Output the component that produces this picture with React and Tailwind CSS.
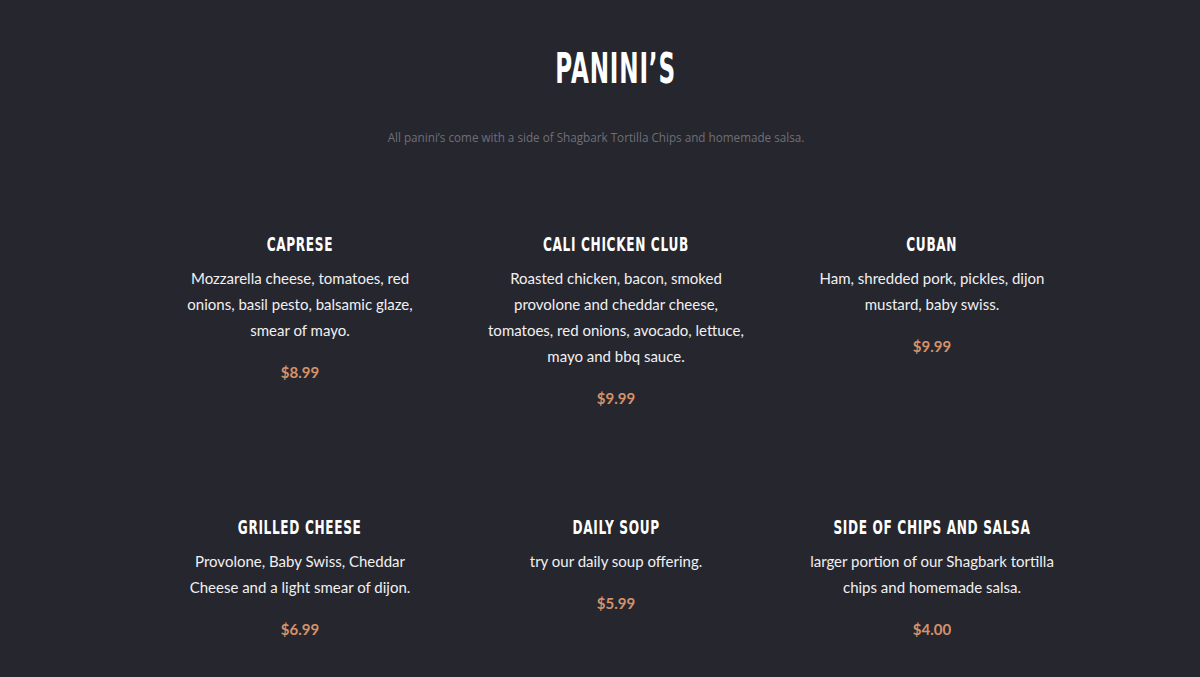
const items = [
  { name: 'Caprese', desc: 'Mozzarella cheese, tomatoes, red onions, basil pesto, balsamic glaze, smear of mayo.', price: '$8.99' },
  { name: 'Cali Chicken Club', desc: 'Roasted chicken, bacon, smoked provolone and cheddar cheese, tomatoes, red onions, avocado, lettuce, mayo and bbq sauce.', price: '$9.99' },
  { name: 'Cuban', desc: 'Ham, shredded pork, pickles, dijon mustard, baby swiss.', price: '$9.99' },
  { name: 'Grilled Cheese', desc: 'Provolone, Baby Swiss, Cheddar Cheese and a light smear of dijon.', price: '$6.99' },
  { name: 'Daily Soup', desc: 'try our daily soup offering.', price: '$5.99' },
  { name: 'Side of Chips and Salsa', desc: 'larger portion of our Shagbark tortilla chips and homemade salsa.', price: '$4.00' },
];

// no condensed face installed, so squeeze DejaVu Sans horizontally
const heading = "font-['DejaVu_Sans',sans-serif] inline-block";
const body = "font-['Lato','Noto_Sans',sans-serif]";

function MenuItem({ item }) {
  return (
    <div className="flex flex-col items-center text-center">
      <h3 className={`${heading} scale-x-[0.64] whitespace-nowrap text-[19px] leading-6 font-bold uppercase tracking-[1px] text-white`}>
        {item.name}
      </h3>
      <p className={`${body} mt-[9px] max-w-[259px] text-[15px] leading-[26px] text-[#f0f0f2]`}>
        {item.desc}
      </p>
      <p className={`${body} mt-[19px] text-[15px] leading-5 font-bold text-[#d3926a]`}>
        {item.price}
      </p>
    </div>
  );
}

export default function App() {
  return (
    <div className="min-h-[677px] bg-[#26262e] pt-[46px]">
      <div className="mx-auto w-[948px] translate-x-[16px]">
        <div className="text-center">
          <h1 className={`${heading} scale-x-[0.55] text-[42px] leading-[46px] font-bold tracking-[1.5px] text-white`}>
            PANINI’S
          </h1>
        </div>
        <p className="mt-[37px] pr-10 text-center font-['Open_Sans',sans-serif] text-[11.7px] leading-4 text-[#6f6f76]">
          All panini’s come with a side of Shagbark Tortilla Chips and homemade salsa.
        </p>

        <div className="mt-[87px] grid grid-cols-3 gap-y-[107px]">
          {items.map((item) => (
            <MenuItem key={item.name} item={item} />
          ))}
        </div>
      </div>
    </div>
  );
}
